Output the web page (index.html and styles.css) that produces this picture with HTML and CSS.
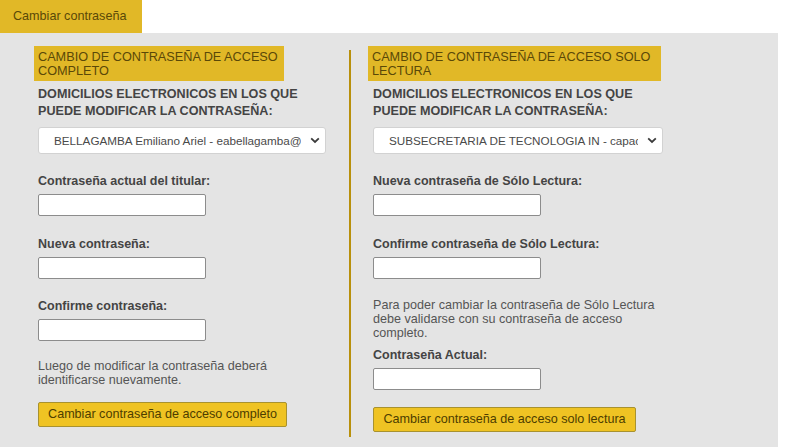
FILE: index.html
```html
<!DOCTYPE html>
<html lang="es">
<head>
<meta charset="utf-8">
<title>Cambiar contraseña</title>
<link rel="stylesheet" href="styles.css">
</head>
<body>
<div class="tabs"><div class="tab">Cambiar contraseña</div></div>
<div class="panel">
  <section class="col col-left">
    <h2 class="heading heading-left">CAMBIO DE CONTRASEÑA DE ACCESO COMPLETO</h2>
    <div class="domicilios">DOMICILIOS ELECTRONICOS EN LOS QUE PUEDE MODIFICAR LA CONTRASEÑA:</div>
    <div class="select-wrap select-left">
      <select class="select">
        <option>BELLAGAMBA Emiliano Ariel - eabellagamba@jusmisiones.gov.ar</option>
      </select>
      <svg class="chevron" width="10" height="7" viewBox="0 0 10 7"><path d="M1.2 1.4 L5 5 L8.8 1.4" fill="none" stroke="#3a3a3a" stroke-width="1.8"/></svg>
    </div>
    <div class="field first">
      <label class="label">Contraseña actual del titular:</label>
      <input class="input" type="password">
    </div>
    <div class="field">
      <label class="label">Nueva contraseña:</label>
      <input class="input" type="password">
    </div>
    <div class="field">
      <label class="label">Confirme contraseña:</label>
      <input class="input" type="password">
    </div>
    <p class="note note-left">Luego de modificar la contraseña deberá identificarse nuevamente.</p>
    <button class="btn btn-left">Cambiar contraseña de acceso completo</button>
  </section>
  <div class="divider"></div>
  <section class="col col-right">
    <h2 class="heading heading-right">CAMBIO DE CONTRASEÑA DE ACCESO SOLO LECTURA</h2>
    <div class="domicilios">DOMICILIOS ELECTRONICOS EN LOS QUE PUEDE MODIFICAR LA CONTRASEÑA:</div>
    <div class="select-wrap select-right">
      <select class="select">
        <option>SUBSECRETARIA DE TECNOLOGIA IN - capacitacion@jusmisiones.gov.ar</option>
      </select>
      <svg class="chevron" width="10" height="7" viewBox="0 0 10 7"><path d="M1.2 1.4 L5 5 L8.8 1.4" fill="none" stroke="#3a3a3a" stroke-width="1.8"/></svg>
    </div>
    <div class="field first">
      <label class="label">Nueva contraseña de Sólo Lectura:</label>
      <input class="input" type="password">
    </div>
    <div class="field">
      <label class="label">Confirme contraseña de Sólo Lectura:</label>
      <input class="input" type="password">
    </div>
    <p class="note note-right">Para poder cambiar la contraseña de Sólo Lectura debe validarse con su contraseña de acceso completo.</p>
    <div class="field field-actual">
      <label class="label">Contraseña Actual:</label>
      <input class="input" type="password">
    </div>
    <button class="btn btn-right">Cambiar contraseña de acceso solo lectura</button>
  </section>
</div>
</body>
</html>
```

FILE: styles.css
```css
html, body {
  margin: 0;
  padding: 0;
  background: #ffffff;
  font-family: "Liberation Sans", Arial, sans-serif;
  font-size: 12.5px;
  color: #555555;
}

.tabs {
  display: flex;
}

.tab {
  width: 142px;
  height: 33px;
  box-sizing: border-box;
  padding-left: 13px;
  line-height: 33px;
  background: #e1b827;
  color: #5a4808;
  font-size: 12.6px;
}

.panel {
  width: 778px;
  background: #e4e4e4;
  display: grid;
  grid-template-columns: 349px 2px 1fr;
  padding: 13px 0 20px 0;
}

.col {
  display: flex;
  flex-direction: column;
  align-items: flex-start;
}

.col-left {
  padding-left: 38px;
}

.col-right {
  padding-left: 22px;
  padding-bottom: 5px;
}

.divider {
  background: #b8900b;
  margin-top: 4px;
}

.heading {
  margin: 0;
  box-sizing: border-box;
  background: #e1b827;
  color: #5a4808;
  font-weight: normal;
  font-size: 12.7px;
  line-height: 14px;
  padding: 4px 4px 3px 4px;
}

.heading-left {
  width: 250px;
  margin-left: -4px;
}

.heading-right {
  width: 293px;
  margin-left: -5px;
}

.domicilios {
  margin-top: 5px;
  width: 300px;
  font-weight: bold;
  font-size: 12.6px;
  line-height: 17px;
  color: #444444;
}

.select-wrap {
  position: relative;
  margin-top: 7px;
  height: 27px;
}

.select-left {
  width: 288px;
}

.select-right {
  width: 290px;
}

.select {
  -webkit-appearance: none;
  appearance: none;
  width: 100%;
  height: 27px;
  box-sizing: border-box;
  border: 1px solid #d2d2d2;
  border-radius: 3px;
  background: #ffffff;
  color: #4a4a4a;
  font-family: "Liberation Sans", Arial, sans-serif;
  font-size: 11.7px;
  padding: 0 24px 0 15px;
  margin: 0;
}

.chevron {
  position: absolute;
  right: 6px;
  top: 10px;
  pointer-events: none;
}

.field {
  display: flex;
  flex-direction: column;
  align-items: flex-start;
  margin-top: 20.5px;
}

.field.first {
  margin-top: 20px;
}

.field-actual {
  margin-top: 8px;
}

.label {
  font-weight: bold;
  font-size: 12.5px;
  line-height: 15px;
  color: #444444;
  margin-bottom: 5px;
}

.input {
  width: 168px;
  height: 22px;
  box-sizing: border-box;
  border: 1px solid #8c8c8c;
  border-radius: 2px;
  background: #ffffff;
  margin: 0;
}

.note {
  margin: 0;
  font-size: 12.6px;
  line-height: 14px;
  color: #555555;
}

.note-left {
  margin-top: 18px;
  width: 250px;
}

.note-right {
  margin-top: 19px;
  width: 290px;
}

.btn {
  height: 25px;
  box-sizing: border-box;
  padding: 0 9px;
  background: #efc323;
  border: 1px solid #a8922f;
  border-radius: 2px;
  color: #4d3d00;
  font-family: "Liberation Sans", Arial, sans-serif;
  font-size: 12.6px;
  line-height: 23px;
}

.btn-left {
  margin-top: 15px;
  width: 249px;
}

.btn-right {
  margin-top: 17px;
  width: 263px;
}
```
